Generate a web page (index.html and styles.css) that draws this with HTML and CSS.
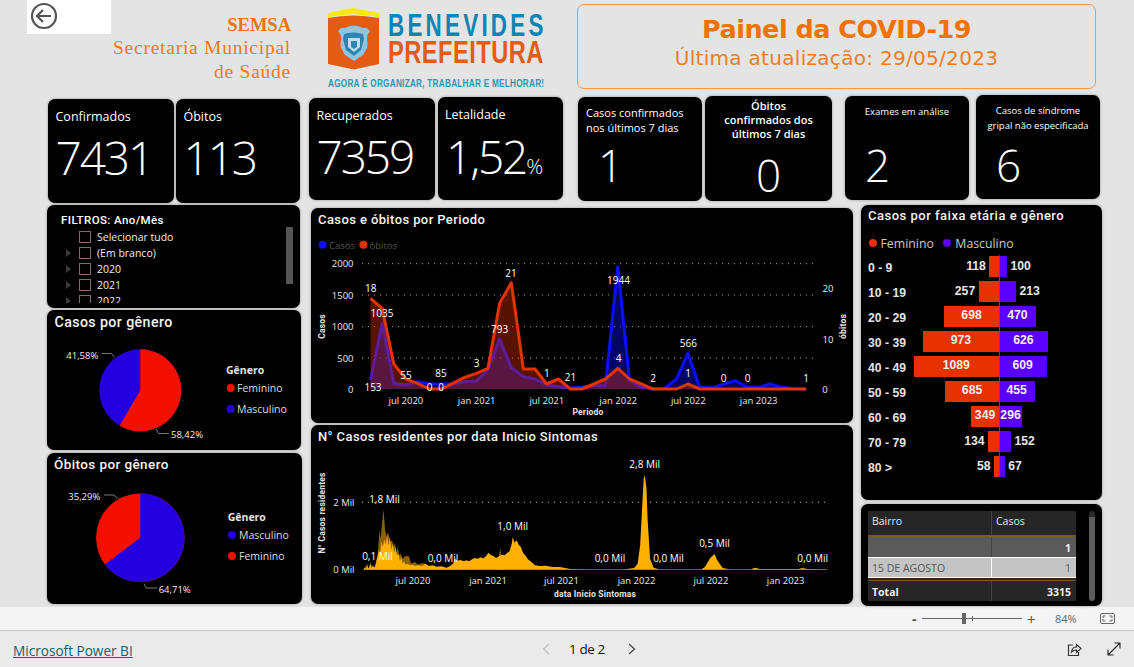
FILE: index.html
```html
<!DOCTYPE html>
<html lang="pt">
<head>
<meta charset="utf-8">
<title>Painel da COVID-19</title>
<link rel="stylesheet" href="styles.css">
</head>
<body>
<div class="page">
  <main class="canvas">
    <header class="top">
      <div class="back">
        <svg width="30" height="30" viewBox="0 0 30 30"><circle cx="15" cy="15" r="12" fill="none" stroke="#555" stroke-width="2.2"/><path d="M22 15H8M14 9l-6 6 6 6" fill="none" stroke="#555" stroke-width="2.2"/></svg>
      </div>
      <div class="brand">
        <div class="brand-a">SEMSA</div>
        <div class="brand-b">Secretaria Municipal</div>
        <div class="brand-b">de Saúde</div>
      </div>
      <svg class="logo" width="218" height="92" viewBox="328 0 218 92">
        <path d="M328 13l25-5 26 5v4l-26-3-25 3z" fill="#f9e80c"/>
        <path d="M328 18q25-5 51 0v46l-25 5.500-26-5.500z" fill="#e45c12"/>
        <path d="M338 31q3-4 7-3 8-5 18 0 4-1 7 3-3 3-3 8 1 5 0 9l-4 7-9 6-9-6-4-7q-1-4 0-9 0-5-3-8z" fill="#8cc6e2"/>
        <path d="M344 34q9-3 19 0l1 5-3 11-7 6-8-6-3-11z" fill="#2c86b2"/>
        <path d="M348 38h12v9l-6 5-6-5z" fill="#bfe0ef"/>
        <path d="M351 41h6v6l-3 2-3-2z" fill="#2c86b2"/>
        <text class="logo-big logo-blue" transform="translate(388 36) scale(.7 1)" textLength="222" lengthAdjust="spacing">BENEVIDES</text>
        <text class="logo-big logo-orange" transform="translate(388 63) scale(.74 1)" textLength="210" lengthAdjust="spacing">PREFEITURA</text>
        <text class="logo-tag" transform="translate(328 87) scale(.78 1)" textLength="277" lengthAdjust="spacing">AGORA É ORGANIZAR, TRABALHAR E MELHORAR!</text>
      </svg>
      <div class="titlebox">
        <div class="title-main">Painel da COVID-19</div>
        <div class="title-sub">Última atualização: 29/05/2023</div>
      </div>
    </header>

    <section class="kpis">
      <div class="tile k-conf"><div class="k-label">Confirmados</div><div class="k-value">7431</div></div>
      <div class="tile k-obit"><div class="k-label">Óbitos</div><div class="k-value">113</div></div>
      <div class="tile k-recu"><div class="k-label">Recuperados</div><div class="k-value">7359</div></div>
      <div class="tile k-leta"><div class="k-label">Letalidade</div><div class="k-value">1,52<span class="k-pct">%</span></div></div>
      <div class="tile k-c7"><div class="k-small">Casos confirmados<br>nos últimos 7 dias</div><div class="k-value k-mid">1</div></div>
      <div class="tile k-o7"><div class="k-small k-bold">Óbitos<br>confirmados dos<br>últimos 7 dias</div><div class="k-value k-mid">0</div></div>
      <div class="tile k-ex"><div class="k-tiny">Exames em análise</div><div class="k-value k-mid">2</div></div>
      <div class="tile k-sg"><div class="k-tiny">Casos de síndrome<br>gripal não especificada</div><div class="k-value k-mid">6</div></div>
    </section>

    <section class="main">
      <div class="col col-left">
        <div class="tile filter">
          <div class="filter-title">FILTROS: Ano/Mês</div>
          <div class="filter-list">
            <div class="f-row"><span class="f-tri f-none"></span><span class="f-box"></span>Selecionar tudo</div>
            <div class="f-row"><span class="f-tri"></span><span class="f-box"></span>(Em branco)</div>
            <div class="f-row"><span class="f-tri"></span><span class="f-box"></span>2020</div>
            <div class="f-row"><span class="f-tri"></span><span class="f-box"></span>2021</div>
            <div class="f-row"><span class="f-tri"></span><span class="f-box"></span>2022</div>
          </div>
          <div class="f-scroll"></div>
        </div>
        <div class="tile pie-a">
          <svg class="fill" viewBox="47 310 254 140">
            <text class="c-title c-title-lg" x="54.500" y="326.500">Casos por gênero</text>
            <circle cx="140.300" cy="390.300" r="41" fill="#2400e0"/>
            <path d="M140.300 390.300V349.300A41 41 0 1 1 119.600 425.700Z" fill="#f41000"/>
            <path class="leader" d="M102 353.500h9.500l3.500 4M156 429l2.500 4.500h10"/>
            <text class="c-pct" x="82.300" y="358.500">41,58%</text>
            <text class="c-pct" x="187" y="437.500">58,42%</text>
            <text class="c-leg-h" x="226" y="374">Gênero</text>
            <circle cx="230.700" cy="388" r="4" fill="#f41000"/><text class="c-leg" x="237" y="392">Feminino</text>
            <circle cx="230.700" cy="409" r="4" fill="#2400e0"/><text class="c-leg" x="237" y="413">Masculino</text>
          </svg>
        </div>
        <div class="tile pie-b">
          <svg class="fill" viewBox="47 453 255 151">
            <text class="c-title c-title-md" x="54" y="469">Óbitos por gênero</text>
            <circle cx="140.300" cy="537.700" r="44.300" fill="#f41000"/>
            <path d="M140.300 537.700V493.400A44.300 44.300 0 1 1 104.900 564.400Z" fill="#2400e0"/>
            <path class="leader" d="M104 495h10l3.500 4M144 583.500l2 4.500h11"/>
            <text class="c-pct" x="84.300" y="500">35,29%</text>
            <text class="c-pct" x="174.700" y="592.500">64,71%</text>
            <text class="c-leg-h" x="227.700" y="521">Gênero</text>
            <circle cx="232" cy="535" r="4" fill="#2400e0"/><text class="c-leg" x="239" y="539">Masculino</text>
            <circle cx="232" cy="556" r="4" fill="#f41000"/><text class="c-leg" x="239" y="560">Feminino</text>
          </svg>
        </div>
      </div>

      <div class="col col-mid">
        <div class="tile chart-a">
          <svg class="fill" viewBox="311 208 542 215">
            <text class="c-title" x="318" y="224">Casos e óbitos por Periodo</text>
            <circle cx="322.700" cy="244.700" r="4" fill="#0a10ff"/><text class="c-muted" x="329" y="248.500">Casos</text>
            <circle cx="363.400" cy="244.700" r="4" fill="#e63200"/><text class="c-muted" x="369.500" y="248.500">óbitos</text>
            <g class="grid">
              <line x1="362" x2="814" y1="263.700" y2="263.700"/><line x1="362" x2="814" y1="295" y2="295"/><line x1="362" x2="814" y1="326.700" y2="326.700"/><line x1="362" x2="814" y1="358" y2="358"/>
            </g>
            <g transform="translate(305 205) scale(.3539 .33333)">
              <polygon class="area-blue" points="185,552 185,525 218,355 251,535 285,540 318,530 351,536 385,537 418,536 451,530 484,528 517,495 550,402 583,488 617,515 650,522 683,540 716,545 750,549 783,547 816,542 849,542 884,185 917,525 950,548 983,552 1016,550 1050,522 1082,445 1115,546 1148,549 1181,538 1216,527 1249,546 1282,547 1315,537 1348,547 1381,551 1416,552"/>
              <polyline class="line-blue" points="185,525 218,355 251,535 285,540 318,530 351,536 385,537 418,536 451,530 484,528 517,495 550,402 583,488 617,515 650,522 683,540 716,545 750,549 783,547 816,542 849,542 884,185 917,525 950,548 983,552 1016,550 1050,522 1082,445 1115,546 1148,549 1181,538 1216,527 1249,546 1282,547 1315,537 1348,547 1381,551 1416,552"/>
              <polygon class="area-red" points="185,552 185,280 218,310 251,477 285,522 318,535 351,552 385,552 418,535 451,517 484,505 517,490 550,295 583,233 617,492 650,492 683,537 716,522 750,552 783,552 816,537 849,522 884,490 917,522 950,537 983,552 1050,552 1082,537 1115,552 1416,552"/>
              <polyline class="line-red" points="185,280 218,310 251,477 285,522 318,535 351,552 385,552 418,535 451,517 484,505 517,490 550,295 583,233 617,492 650,492 683,537 716,522 750,552 783,552 816,537 849,522 884,490 917,522 950,537 983,552 1050,552 1082,537 1115,552 1416,552"/>
            </g>
            <g class="c-axis end">
              <text x="353.500" y="267">2000</text><text x="353.500" y="298.500">1500</text><text x="353.500" y="330">1000</text><text x="353.500" y="361.500">500</text><text x="353.500" y="392.500">0</text>
            </g>
            <g class="c-axis mid">
              <text x="828" y="292">20</text><text x="828" y="342.500">10</text><text x="825" y="392.500">0</text>
            </g>
            <g class="c-axis mid">
              <text x="405.900" y="403.500">jul 2020</text><text x="476.700" y="403.500">jan 2021</text><text x="546.800" y="403.500">jul 2021</text><text x="618.200" y="403.500">jan 2022</text><text x="688.300" y="403.500">jul 2022</text><text x="758.700" y="403.500">jan 2023</text>
            </g>
            <text class="c-axt mid" x="588" y="415">Periodo</text>
            <text class="c-axt mid" transform="translate(325 326.500) rotate(-90)">Casos</text>
            <text class="c-axt mid" transform="translate(846 326.500) rotate(-90)">óbitos</text>
            <g class="c-data mid">
              <text x="370.800" y="291.500">18</text><text x="382" y="317">1035</text><text x="373" y="390.500">153</text><text x="405.900" y="379">55</text><text x="441" y="377">85</text><text x="429.600" y="390.500">0</text><text x="441" y="390.500">0</text><text x="476.700" y="367">3</text><text x="499.700" y="333">793</text><text x="511" y="277">21</text><text x="546.800" y="377">1</text><text x="570.500" y="381">21</text><text x="618.500" y="283.500">1944</text><text x="618.500" y="362">4</text><text x="653" y="382">2</text><text x="688.300" y="347">566</text><text x="688" y="377">1</text><text x="723.700" y="382">0</text><text x="747.500" y="382">0</text><text x="806" y="382">1</text>
            </g>
          </svg>
        </div>
        <div class="tile chart-b">
          <svg class="fill" viewBox="311 425 542 179">
            <text class="c-title" x="318" y="441">N° Casos residentes por data Inicio Sintomas</text>
            <line class="gridl" x1="362" x2="825" y1="502.300" y2="502.300"/>
            <g transform="translate(305 422) scale(.3539 .33333)">
              <polygon fill="#8a6200" points="165,443 176,425 180,443 186,420 190,443 196,443 200,420 206,400 210,325 214,350 218,300 222,262 226,320 230,345 234,330 238,345 242,360 246,355 250,375 254,362 258,395 262,375 266,400 270,395 276,410 282,403 288,402 294,403 300,425 310,420 320,428 330,423 340,425 350,440 540,443 552,378 558,443"/>
              <polygon fill="#fdb000" points="165,443 170,436 172,443 176,432 180,440 184,425 188,438 192,430 196,437 200,428 204,405 208,385 212,395 216,360 220,375 224,352 228,368 232,340 236,372 240,345 244,385 248,362 252,392 256,375 260,400 264,395 268,418 272,405 276,425 280,418 284,428 290,425 296,430 304,428 312,432 320,429 330,433 340,425 350,432 360,430 372,434 385,433 400,437 410,432 418,425 424,410 430,416 440,414 448,418 456,415 464,418 472,412 480,408 488,410 496,406 504,409 512,402 518,392 524,398 532,402 540,408 548,403 556,398 564,400 572,392 578,388 584,365 587,345 592,362 598,355 604,368 610,375 616,392 622,400 630,412 640,420 650,430 664,432 680,431 700,435 720,435 750,441 800,442 900,442 915,440 930,438 940,425 947,370 952,270 957,170 960,160 965,200 968,290 975,410 985,437 1000,442 1120,442 1130,435 1145,408 1157,396 1165,415 1180,438 1200,442 1260,442 1272,437 1285,441 1395,441 1405,438 1420,441 1476,442 1476,443"/>
            </g>
            <g class="c-axis end">
              <text x="354.500" y="505.500">2 Mil</text><text x="354.500" y="573">0 Mil</text>
            </g>
            <g class="c-axis mid">
              <text x="413" y="583.500">jul 2020</text><text x="488" y="583.500">jan 2021</text><text x="561.500" y="583.500">jul 2021</text><text x="636.500" y="583.500">jan 2022</text><text x="711" y="583.500">jul 2022</text><text x="785.600" y="583.500">jan 2023</text>
            </g>
            <text class="c-axt mid" x="595" y="597">data Inicio Sintomas</text>
            <text class="c-axt mid" transform="translate(325 513) rotate(-90)">N° Casos residentes</text>
            <g class="c-data mid">
              <text x="644.700" y="468">2,8 Mil</text><text x="384.500" y="503">1,8 Mil</text><text x="377.500" y="560">0,1 Mil</text><text x="443" y="562">0,0 Mil</text><text x="512.700" y="530">1,0 Mil</text><text x="610" y="562">0,0 Mil</text><text x="668.500" y="562">0,0 Mil</text><text x="714.500" y="547">0,5 Mil</text><text x="812.700" y="562">0,0 Mil</text>
            </g>
          </svg>
        </div>
      </div>

      <div class="col col-right">
        <div class="tile ages">
          <div class="ages-title">Casos por faixa etária e gênero</div>
          <div class="ages-legend">
            <span class="dot dot-f"></span><span class="leg-f">Feminino</span>
            <span class="dot dot-m"></span><span>Masculino</span>
          </div>
          <div class="pyramid">
            <div class="a-row"><div class="a-label">0 - 9</div><div class="a-left"><span class="a-out">118</span><div class="bar f" style="width:9.3px"></div></div><div class="a-right"><div class="bar m" style="width:8.3px"></div><span class="a-out">100</span></div></div>
            <div class="a-row"><div class="a-label">10 - 19</div><div class="a-left"><span class="a-out">257</span><div class="bar f" style="width:20px"></div></div><div class="a-right"><div class="bar m" style="width:17.3px"></div><span class="a-out">213</span></div></div>
            <div class="a-row"><div class="a-label">20 - 29</div><div class="a-left"><div class="bar f" style="width:54.3px">698</div></div><div class="a-right"><div class="bar m" style="width:37.3px">470</div></div></div>
            <div class="a-row"><div class="a-label">30 - 39</div><div class="a-left"><div class="bar f" style="width:75.7px">973</div></div><div class="a-right"><div class="bar m" style="width:49.3px">626</div></div></div>
            <div class="a-row"><div class="a-label">40 - 49</div><div class="a-left"><div class="bar f" style="width:84.7px">1089</div></div><div class="a-right"><div class="bar m" style="width:48px">609</div></div></div>
            <div class="a-row"><div class="a-label">50 - 59</div><div class="a-left"><div class="bar f" style="width:53.3px">685</div></div><div class="a-right"><div class="bar m" style="width:36px">455</div></div></div>
            <div class="a-row"><div class="a-label">60 - 69</div><div class="a-left"><div class="bar f" style="width:27.3px">349</div></div><div class="a-right"><div class="bar m" style="width:23.7px">296</div></div></div>
            <div class="a-row"><div class="a-label">70 - 79</div><div class="a-left"><span class="a-out">134</span><div class="bar f" style="width:10.7px"></div></div><div class="a-right"><div class="bar m" style="width:12.3px"></div><span class="a-out">152</span></div></div>
            <div class="a-row"><div class="a-label">80 &gt;</div><div class="a-left"><span class="a-out">58</span><div class="bar f" style="width:4.7px"></div></div><div class="a-right"><div class="bar m" style="width:6px"></div><span class="a-out">67</span></div></div>
          </div>
        </div>
        <div class="tile bairros">
          <div class="tbl">
            <div class="t-row t-head"><div class="t-a">Bairro</div><div class="t-b">Casos</div></div>
            <div class="t-row t-dark"><div class="t-a"></div><div class="t-b t-num">1</div></div>
            <div class="t-row t-light"><div class="t-a">15 DE AGOSTO</div><div class="t-b t-num">1</div></div>
            <div class="t-gap"></div>
            <div class="t-row t-total"><div class="t-a">Total</div><div class="t-b t-num">3315</div></div>
          </div>
          <div class="t-scroll"></div>
        </div>
      </div>
    </section>
  </main>

  <div class="zoombar">
    <span class="z-sign">-</span>
    <div class="z-slider"><span class="z-thumb"></span><span class="z-tick"></span></div>
    <span class="z-sign z-plus">+</span>
    <span class="z-pct">84%</span>
    <svg class="z-fit" width="15" height="11" viewBox="0 0 15 11"><rect x=".5" y=".5" width="14" height="10" rx="1.500" fill="none" stroke="#666"/><path d="M3 5V3h2.500M12 5V3H9.500M3 6v2h2.500M12 6v2H9.500" fill="none" stroke="#666"/></svg>
  </div>

  <footer class="footer">
    <a class="pbi" href="#">Microsoft Power BI</a>
    <div class="pager">
      <svg width="8" height="12" viewBox="0 0 8 12"><path d="M7 1L1.500 6 7 11" fill="none" stroke="#bdbdbd" stroke-width="1.200"/></svg>
      <span class="pager-text">1 de 2</span>
      <svg width="8" height="12" viewBox="0 0 8 12"><path d="M1 1l5.500 5L1 11" fill="none" stroke="#444" stroke-width="1.200"/></svg>
    </div>
    <div class="foot-icons">
      <svg width="15" height="15" viewBox="0 0 15 15"><path d="M6 3H1.500v10.500h10V10" fill="none" stroke="#333" stroke-width="1.200"/><path d="M4.500 10q.5-5 5-5V2.500L14 6.500l-4.500 4V8q-3 0-5 2z" fill="none" stroke="#333" stroke-width="1.200"/></svg>
      <svg width="14" height="14" viewBox="0 0 14 14"><path d="M1 13L13 1M7.500 1H13v5.500M1 7.500V13h5.500" fill="none" stroke="#222" stroke-width="1.100"/></svg>
    </div>
  </footer>
</div>
</body>
</html>
```
FILE: styles.css
```css
* { box-sizing: border-box; }
html, body { margin: 0; height: 100%; }
body { background: #e4e4e4; font-family: "Open Sans", "Liberation Sans", sans-serif; overflow: hidden; }
.page { width: 1134px; height: 667px; display: flex; flex-direction: column; }
.canvas { height: 607px; background: #e4e4e4; display: flex; flex-direction: column; }

.tile { background: #000; border-radius: 7px; color: #fff; box-shadow: 0 0 3px rgba(0,0,0,.35); position: relative; }
.fill { display: block; width: 100%; height: 100%; }

/* header */
.top { height: 95px; display: flex; align-items: flex-start; flex: none; }
.back { margin-left: 27px; width: 84px; height: 34px; background: #fff; padding: 1px 2px; flex: none; }
.back svg { display: block; }
.brand { width: 180px; margin-top: 14px; text-align: right; font-family: "Liberation Serif", serif; color: #ee7a1e; flex: none; }
.brand-a { font-size: 18.500px; font-weight: 700; line-height: 22px; color: #ec7410; }
.brand-b { font-size: 19.500px; line-height: 24px; letter-spacing: .75px; }
.logo { margin-left: 37px; flex: none; display: block; }
.logo-big { font-family: "Liberation Sans", sans-serif; font-weight: 700; font-size: 32px; }
.logo-blue { fill: #0a85b5; }
.logo-orange { fill: #e45c12; }
.logo-tag { font-family: "Liberation Sans", sans-serif; font-weight: 700; font-size: 10.500px; fill: #2a96b5; }
.titlebox { margin: 4px 0 0 31px; width: 519px; height: 85px; border: 1px solid #ee9a50; border-radius: 7px; text-align: center; color: #ef7300; flex: none; padding-top: 9px; }
.title-main { font-family: "DejaVu Sans", sans-serif; font-weight: 700; font-size: 25.500px; line-height: 31px; letter-spacing: -.5px; }
.title-sub { font-family: "DejaVu Sans", sans-serif; font-size: 20px; line-height: 26px; color: #ec7d24; letter-spacing: .3px; }

/* KPI tiles */
.kpis { height: 110px; display: flex; align-items: flex-start; padding-left: 48px; flex: none; }
.k-label { font-size: 12.500px; line-height: 16px; }
.k-value { font-weight: 350; font-size: 46px; line-height: 50px; letter-spacing: -2.100px; }
.k-pct { font-size: 21px; letter-spacing: 0; }
.k-mid { font-size: 44px; letter-spacing: 0; }
.k-small { font-size: 11px; line-height: 15px; }
.k-tiny { font-size: 9.500px; line-height: 15px; text-align: center; }
.k-bold { font-weight: 600; text-align: center; line-height: 14px; }

.k-conf { width: 126px; height: 104px; margin-top: 4px; padding: 10px 0 0 7.500px; }
.k-conf .k-value { margin-top: 7px; }
.k-obit { width: 124px; height: 104px; margin: 4px 0 0 2px; padding: 10px 0 0 7.500px; }
.k-obit .k-value { margin: 7px 0 0 0; }
.k-recu { width: 126px; height: 102px; margin: 3px 0 0 9px; padding: 10px 0 0 7.500px; }
.k-recu .k-value { margin-top: 7px; }
.k-leta { width: 125px; height: 103px; margin: 2px 0 0 3px; padding: 10px 0 0 7px; }
.k-leta .k-value { margin: 8px 0 0 1px; }
.k-c7 { width: 124px; height: 104px; margin: 2px 0 0 15px; padding: 8px 0 0 8px; }
.k-c7 .k-mid { margin: 5px 0 0 12px; }
.k-o7 { width: 127px; height: 105px; margin: 1px 0 0 3px; padding: 3px 0 0; text-align: center; }
.k-o7 .k-mid { margin-top: 9px; }
.k-ex { width: 124px; height: 104px; margin: 1px 0 0 13px; padding: 8px 0 0; }
.k-ex .k-mid { margin: 21px 0 0 20px; }
.k-sg { width: 124px; height: 104px; margin: 0 0 0 7px; padding: 8px 0 0; }
.k-sg .k-mid { margin: 7px 0 0 20px; }

/* main columns */
.main { display: flex; flex: 1; min-height: 0; }
.col { display: flex; flex-direction: column; flex: none; }
.col-left { width: 255px; margin-left: 47px; }
.col-mid { width: 542px; margin-left: 9px; padding-top: 3px; }
.col-right { width: 241px; margin-left: 8px; }

/* filter */
.filter { width: 253px; height: 103px; padding: 8px 0 0 14px; }
.filter-title { font-family: Roboto, sans-serif; font-weight: 500; font-size: 11.500px; line-height: 14px; letter-spacing: .4px; }
.filter-list { height: 74px; overflow: hidden; margin-top: 2px; }
.f-row { display: flex; align-items: center; height: 16px; font-size: 10.500px; color: #eee; }
.f-tri { width: 0; height: 0; border-left: 5px solid #3c3c3c; border-top: 4px solid transparent; border-bottom: 4px solid transparent; margin: 0 0 0 5px; }
.f-none { visibility: hidden; }
.f-box { width: 12px; height: 12px; border: 1px solid #8c6a5e; margin: 0 6px 0 8px; flex: none; }
.f-scroll { position: absolute; left: 238.500px; top: 22px; width: 7px; height: 57px; background: #555; }
.pie-a { width: 254px; height: 140px; margin: 2px 0 0; }
.pie-b { width: 255px; height: 151px; margin-top: 3px; }

/* chart text */
.c-title { font-family: Roboto, sans-serif; font-weight: 500; font-size: 13px; letter-spacing: .4px; fill: #f4f4f4; }
.c-title-lg { font-size: 14.200px; }
.c-title-md { font-size: 13.500px; }
.c-pct { font-size: 9.500px; fill: #eee; text-anchor: middle; }
.c-leg-h { font-size: 10.500px; font-weight: 700; fill: #e4e4e4; }
.c-leg { font-size: 10.500px; fill: #ddd; }
.c-muted { font-size: 9.500px; fill: #555; }
.c-axis text { font-size: 9.500px; fill: #e8e8e8; }
.c-data text { font-size: 10px; fill: #fff; }
.c-axt { font-family: Roboto, sans-serif; font-size: 8.500px; font-weight: 700; fill: #e4e4e4; letter-spacing: .2px; }
.end text { text-anchor: end; }
.mid, .mid text { text-anchor: middle; }
.leader { fill: none; stroke: #777; stroke-width: 1; }
.grid line, .gridl { stroke: #aaa; stroke-width: 1; stroke-dasharray: 1 5; }
.area-blue { fill: #0a10ff; fill-opacity: .4; }
.area-red { fill: #e63200; fill-opacity: .38; }
.line-blue, .line-red { fill: none; stroke-width: 3; vector-effect: non-scaling-stroke; stroke-linejoin: round; }
.line-blue { stroke: #0a10ff; }
.line-red { stroke: #e63200; }
.chart-a { height: 215px; }
.chart-b { height: 179px; margin-top: 2px; }

/* age pyramid */
.ages { height: 295px; padding: 3px 0 0 7px; }
.ages-title { font-family: Roboto, sans-serif; font-weight: 500; font-size: 13px; line-height: 16px; letter-spacing: .5px; color: #f4f4f4; }
.ages-legend { display: flex; align-items: center; height: 18px; margin-top: 10px; font-size: 12.300px; color: #c8c8c8; }
.dot { width: 8px; height: 8px; border-radius: 50%; margin: 0 4px 0 .500px; }
.dot-f { background: #e63200; }
.dot-m { background: #5a00ff; }
.leg-f { margin-right: 9px; }
.pyramid { position: relative; margin-top: 2px; }
.pyramid::after { content: ""; position: absolute; left: 130.500px; top: 1px; bottom: 3px; width: 1.500px; background: #555; }
.a-row { display: flex; align-items: center; height: 25px; font-family: "Liberation Sans", sans-serif; font-weight: 700; font-size: 12.200px; }
.a-label { width: 43.700px; color: #e4e4e4; position: relative; top: 1px; }
.a-left { width: 87px; display: flex; justify-content: flex-end; align-items: center; }
.a-right { flex: 1; display: flex; align-items: center; }
.bar { height: 21.500px; display: flex; align-items: center; justify-content: center; flex: none; color: #f0f0f0; line-height: 19px; padding-bottom: 2px; white-space: nowrap; }
.bar.f { background: #e63200; }
.bar.m { background: #5a00ff; }
.a-out { color: #e8e8e8; margin: -2px 3.500px 0; }

/* table */
.bairros { height: 102px; margin-top: 4px; width: 241px; padding: 7px 0 0 7px; }
.tbl { width: 208px; font-size: 10.500px; }
.t-row { display: flex; align-items: center; }
.t-a { width: 124px; padding-left: 4px; height: 100%; display: flex; align-items: center; border-right: 1px solid #444; }
.t-b { flex: 1; padding: 0 5px 0 4px; height: 100%; display: flex; align-items: center; }
.t-num { justify-content: flex-end; font-weight: 700; }
.t-head { height: 26px; background: #262626; color: #e4e4e4; border-bottom: 2px solid #7a5a20; }
.t-head .t-a, .t-head .t-b { padding-bottom: 4px; }
.t-dark { height: 20px; background: #5a5a5a; color: #eee; }
.t-dark .t-b { padding-top: 2px; }
.t-light { height: 21px; background: #c4c4c4; color: #555; border-top: 1px solid #fff; border-bottom: 1px solid #fff; }
.t-light .t-a { border-right-color: #fff; }
.t-light .t-num { font-weight: 400; }
.t-gap { height: 3px; background: #262626; border-bottom: 1px solid #7a5a20; }
.t-total { height: 20px; background: #262626; color: #eee; font-weight: 700; }
.t-total .t-a, .t-total .t-b { padding-top: 1px; }
.t-scroll { position: absolute; left: 228px; top: 7px; width: 6px; height: 90px; background: #5c5c5c; border-radius: 3px; border-top: 6px solid #2a2a2a; }

/* zoom bar */
.zoombar { height: 24px; background: #f4f4f4; border-bottom: 1px solid #c8c8c8; display: flex; align-items: center; flex: none; padding-left: 912px; font-size: 11px; color: #666; }
.z-sign { font-size: 14px; font-weight: 700; width: 10px; color: #555; }
.z-slider { width: 100px; height: 1px; background: #666; position: relative; }
.z-thumb { position: absolute; left: 40px; top: -5px; width: 4px; height: 11px; background: #666; }
.z-tick { position: absolute; left: 50px; top: -2px; width: 1px; height: 5px; background: #666; }
.z-plus { margin-left: 5px; font-weight: 400; font-size: 15px; }
.z-pct { margin-left: 18px; width: 24px; }
.z-fit { margin-left: 21px; }

/* footer */
.footer { height: 36px; background: #eaeaea; display: flex; align-items: center; flex: none; padding-left: 13px; }
.pbi { font-size: 13.600px; color: #10636b; text-decoration: underline; width: 529px; padding-top: 3px; }
.pager { display: flex; align-items: center; width: 526px; }
.pager-text { font-size: 13.500px; font-weight: 500; color: #111; width: 39px; letter-spacing: -.4px; white-space: nowrap; margin: 0 20px 0 19px; }
.foot-icons { display: flex; align-items: center; gap: 25px; margin-left: -1px; }
```
